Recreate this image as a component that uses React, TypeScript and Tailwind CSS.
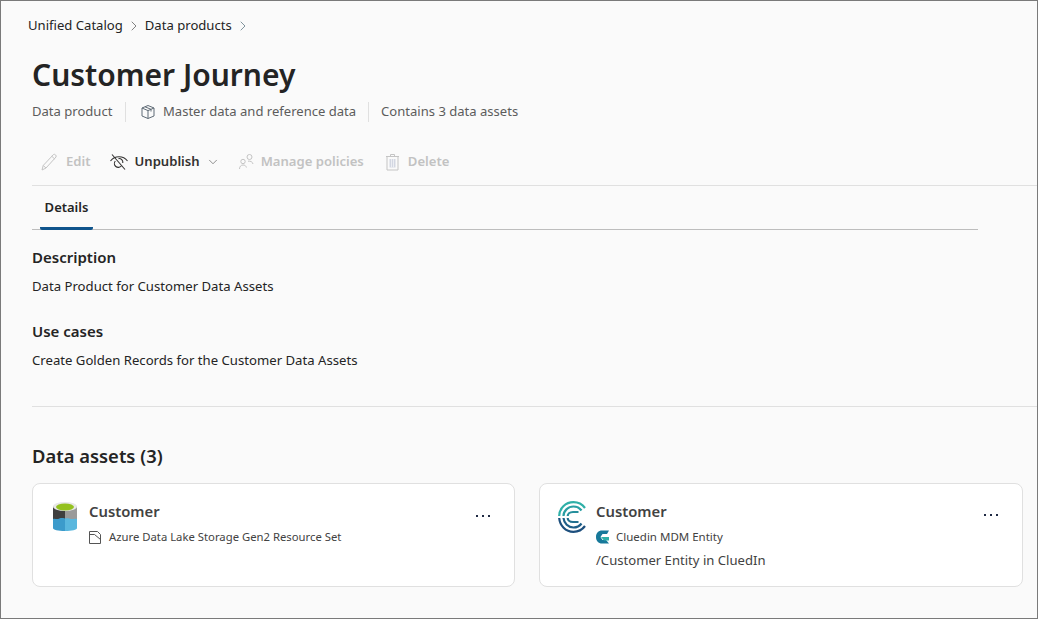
import { ChevronDown, ChevronRight } from 'lucide-react';

const font = "font-['Noto_Sans',sans-serif]";

function PackageIcon() {
  return (
    <svg width="16" height="16" viewBox="0 0 16 16" fill="none" stroke="#5f6b76" strokeWidth="1">
      <path d="M8 1.500 14 4v8l-6 2.500L2 12V4z" />
      <path d="M2 4l6 2.600L14 4M8 6.600v7.900M5 2.800l6 2.500v2.200" />
    </svg>
  );
}

function PencilIcon() {
  return (
    <svg width="17" height="18" viewBox="0 0 17 18" fill="none" stroke="#c4c4c4" strokeWidth="1">
      <path d="M12.500 1.500c1-1 3.500 1.200 2.500 2.500L5 15l-4 2 1.200-4.500z" />
      <path d="M10.800 3.300l3 2.800M2.200 12.500 5 15" />
    </svg>
  );
}

function EyeOffIcon() {
  return (
    <svg width="18" height="18" viewBox="0 0 18 18" fill="none" stroke="#323130" strokeWidth="1.100">
      <path d="M.5 8C2.800 5 5.700 3.800 9 3.800S15.200 5 17.500 8" />
      <path d="M5.300 8a3.800 3.800 0 0 0 6 5M12.800 10a3.800 3.800 0 0 0-4.300-4.400" />
      <path d="M2 1.500 15 16.500" />
    </svg>
  );
}

function PeopleIcon() {
  return (
    <svg width="17" height="17" viewBox="0 0 17 17" fill="none" stroke="#c4c4c4" strokeWidth="1">
      <circle cx="11.500" cy="4" r="2.500" />
      <circle cx="5" cy="8.500" r="2.200" />
      <path d="M1.500 16c0-2.500 1.500-4 3.500-4s3 1 3.400 2.500M10 8.200c2.500-.4 4.500.6 5 2.800" />
    </svg>
  );
}

function TrashIcon() {
  return (
    <svg width="15" height="18" viewBox="0 0 15 18" fill="none" stroke="#c4c4c4" strokeWidth="1">
      <path d="M1 3.500h13M5.500 3.500v-2h4v2M2 3.500v13.500h11V3.500" />
      <rect x="4.500" y="6" width="6" height="8.500" fill="#d3d7e2" stroke="none" />
      <path d="M6.500 6v8.500M8.500 6v8.500" stroke="#eceef3" />
    </svg>
  );
}

function DataLakeIcon() {
  return (
    <svg width="24" height="30" viewBox="0 0 24 30">
      <path d="M0 4h12v24C5 28 0 27 0 25z" fill="#3f3f3f" />
      <path d="M24 4H12v24c7 0 12-1 12-3z" fill="#9a9a9a" />
      <path d="M0 17c2-1 3 .5 5 0s3-1.500 7-.5V29C5 29 0 28 0 26z" fill="#3c9bcb" />
      <path d="M24 17c-3-1-4 .5-6 0s-3-1-6-.5V29c7 0 12-1 12-3z" fill="#5ab7de" />
      <ellipse cx="12" cy="4.500" rx="12" ry="4.500" fill="#e8e8e8" />
      <ellipse cx="12" cy="5" rx="9" ry="3.500" fill="#94c11f" />
    </svg>
  );
}

function ResourceSetIcon() {
  return (
    <svg width="12" height="13" viewBox="0 0 12 13" fill="none" stroke="#555" strokeWidth="1">
      <path d="M.5.500h8l3 3v9H.5z" />
      <path d="M.5 3.500h5l6 5" />
    </svg>
  );
}

function CluedinLogo() {
  return (
    <svg width="28" height="32" viewBox="0 0 28 32" fill="none" strokeWidth="2.200">
      <path d="M27 7C24 3 20 1.200 15.500 1.200 7.500 1.200 1.200 7.500 1.200 15" stroke="#2fb0a8" />
      <path d="M23.500 9.500C21.500 6.800 18.800 5.500 15.500 5.500 10 5.500 5.500 10 5.500 15" stroke="#2a9fa3" />
      <path d="M20.500 11H15C11.500 11 9.700 13 9.700 15" stroke="#268f9c" />
      <path d="M1.200 17C1.800 24.500 7.500 30.800 15.500 30.800c4.500 0 8.500-1.800 11.500-5.800" stroke="#1d4f7d" />
      <path d="M5.500 17c.5 5.300 4.700 9.500 10 9.500 3.300 0 6-1.300 8-4" stroke="#1f5f88" />
      <path d="M9.700 17c0 2 1.800 4 5.300 4h5.500" stroke="#22708f" />
    </svg>
  );
}

function CluedinMark() {
  return (
    <svg width="13" height="14" viewBox="0 0 13 14">
      <path d="M13 .500H6C2.500.500 0 3 0 7s2.500 6.500 6 6.500h7L10 10H6.500L4.500 7 6.500 4H11z" fill="#17799a" />
      <path d="M5 7h8v3.500H8z" fill="#2fb0a8" />
    </svg>
  );
}

function MoreDots() {
  return (
    <div className="flex gap-[4px] mt-[13px] mr-[24px]">
      <span className="w-[2px] h-[2px] bg-[#1f2a44]" />
      <span className="w-[2px] h-[2px] bg-[#1f2a44]" />
      <span className="w-[2px] h-[2px] bg-[#1f2a44]" />
    </div>
  );
}

export default function App() {
  return (
    <div className={`${font} w-[1038px] h-[619px] overflow-hidden border border-[#7a7a7a] bg-[#fafafa] text-[#242424]`}>
      {/* Breadcrumb */}
      <div className="flex items-center h-[20px] mt-[15px] ml-[27px] text-[13.1px]">
        <span>Unified Catalog</span>
        <ChevronRight size={16} strokeWidth={1} className="mx-[3px] text-[#444]" />
        <span>Data products</span>
        <ChevronRight size={16} strokeWidth={1} className="mx-[3px] text-[#44616e]" />
      </div>

      <div className="pl-[31px]">
        <h1 className="mt-[17px] h-[44px] text-[30px] leading-[44px] font-semibold">Customer Journey</h1>

        <div className="flex items-center mt-[4px] h-[22px] text-[13.05px] text-[#5c5c5c]">
          <span className="w-[93px]">Data product</span>
          <div className="w-px h-[20px] bg-[#e0e0e0]" />
          <div className="flex items-center gap-[7px] pl-[14px] pr-[12px]">
            <PackageIcon />
            <span>Master data and reference data</span>
          </div>
          <div className="w-px h-[20px] bg-[#e0e0e0]" />
          <span className="pl-[12px]">Contains 3 data assets</span>
        </div>

        {/* Toolbar */}
        <div className="flex items-center h-[63px] pl-[9px] pt-[15px] border-b border-[#e0e0e0] text-[13.1px] font-semibold text-[#c2c2c2]">
          <PencilIcon />
          <span className="ml-[8px]">Edit</span>
          <div className="ml-[19px]"><EyeOffIcon /></div>
          <span className="ml-[7px] text-[#323130]">Unpublish</span>
          <ChevronDown size={14} strokeWidth={1} className="ml-[6px] text-[#444]" />
          <div className="ml-[18px]"><PeopleIcon /></div>
          <span className="ml-[6px]">Manage policies</span>
          <div className="ml-[21px]"><TrashIcon /></div>
          <span className="ml-[8px]">Delete</span>
        </div>

        {/* Tabs */}
        <div className="flex h-[44px] w-[946px] border-b border-[#bdbdbd]">
          <div className="ml-[8px] w-[53px] h-[44px] border-b-[3px] border-[#0f548c] rounded-b-[2px] text-center text-[13px] font-semibold leading-[42px]">
            Details
          </div>
        </div>

        <h2 className="mt-[15px] h-[24px] text-[15px] leading-[24px] font-semibold">Description</h2>
        <p className="mt-[7px] h-[20px] text-[13.15px] leading-[20px]">Data Product for Customer Data Assets</p>
        <h2 className="mt-[23px] h-[24px] text-[15px] leading-[24px] font-semibold">Use cases</h2>
        <p className="mt-[7px] h-[20px] text-[13.15px] leading-[20px]">Create Golden Records for the Customer Data Assets</p>

        <div className="mt-[36px] border-t border-[#e0e0e0]" />

        <h2 className="mt-[35px] h-[28px] text-[18.4px] leading-[28px] font-semibold">Data assets (3)</h2>

        {/* Asset cards */}
        <div className="flex gap-[24px] mt-[13px]">
          <div className="flex w-[483px] h-[104px] rounded-[8px] border border-[#e0e0e0] bg-white pl-[20px] pt-[18px]">
            <DataLakeIcon />
            <div className="flex-1 ml-[12px] -mt-[3px]">
              <div className="h-[24px] text-[14.8px] leading-[24px] font-semibold text-[#424242]">Customer</div>
              <div className="flex items-center gap-[8px] mt-[5px] h-[18px] text-[11.3px] text-[#424242]">
                <ResourceSetIcon />
                <span>Azure Data Lake Storage Gen2 Resource Set</span>
              </div>
            </div>
            <MoreDots />
          </div>
          <div className="flex w-[484px] h-[104px] rounded-[8px] border border-[#e0e0e0] bg-white pl-[18px] pt-[17px]">
            <CluedinLogo />
            <div className="flex-1 ml-[10px] -mt-[2px]">
              <div className="h-[24px] text-[14.8px] leading-[24px] font-semibold text-[#424242]">Customer</div>
              <div className="flex items-center gap-[7px] mt-[5px] h-[18px] text-[11.5px] text-[#424242]">
                <CluedinMark />
                <span>Cluedin MDM Entity</span>
              </div>
              <div className="mt-[4px] h-[20px] text-[13.1px] leading-[20px] text-[#424242]">/Customer Entity in CluedIn</div>
            </div>
            <MoreDots />
          </div>
        </div>
      </div>
    </div>
  );
}
